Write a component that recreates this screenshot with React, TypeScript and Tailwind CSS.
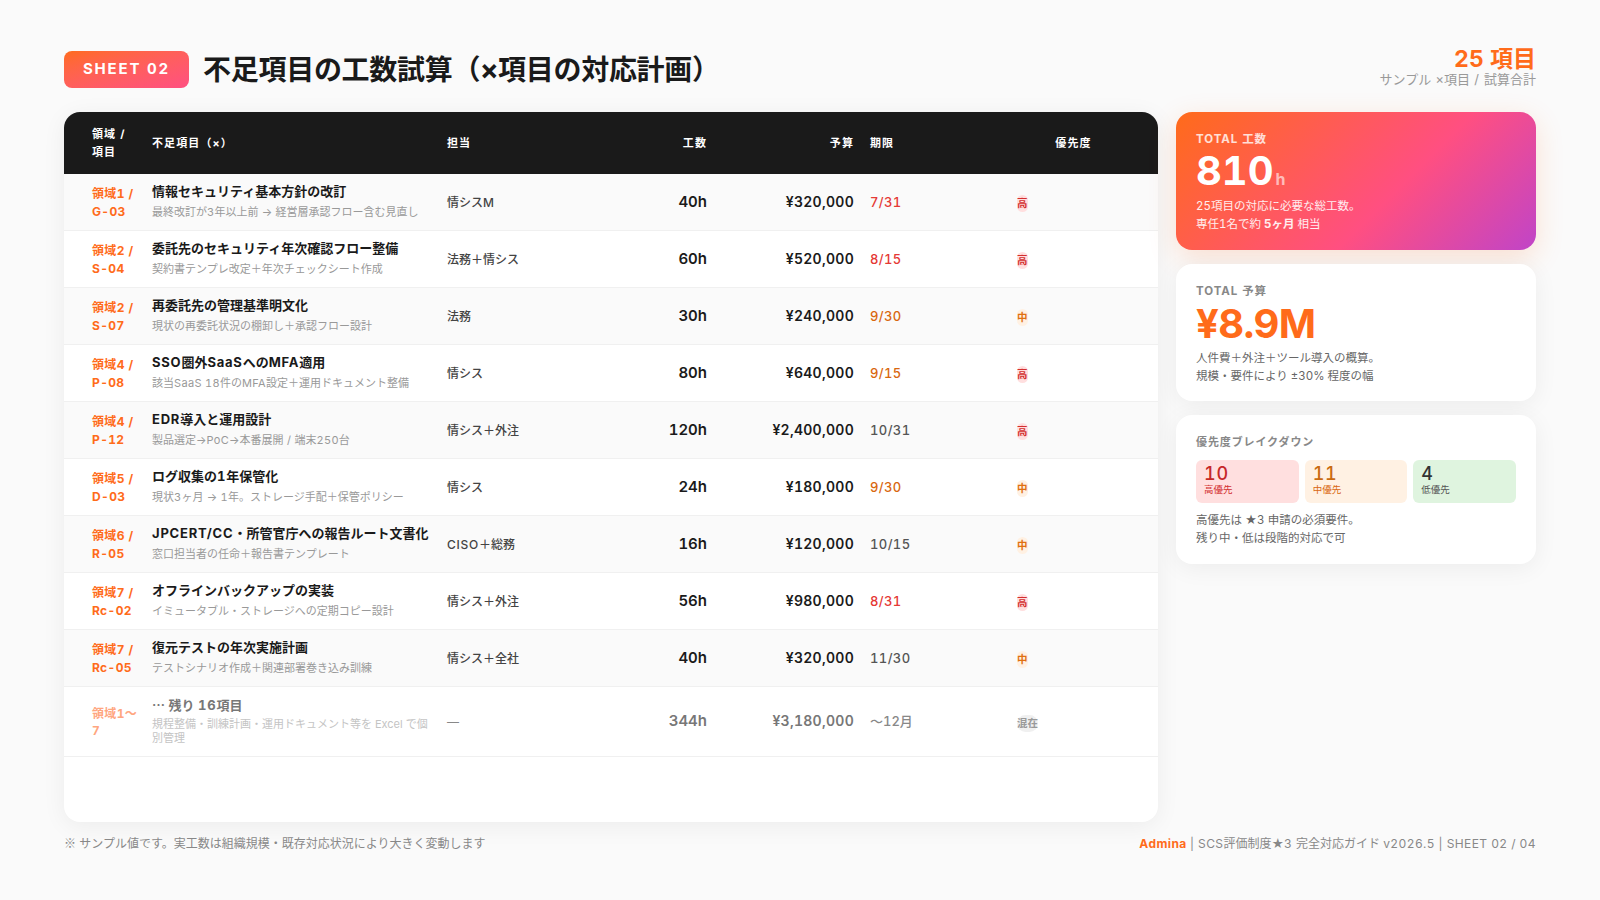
import { Fragment } from 'react';

const rows = [
  { area: '領域1 / G-03', title: '情報セキュリティ基本方針の改訂', sub: '最終改訂が3年以上前 → 経営層承認フロー含む見直し', owner: '情シスM', hours: '40h', cost: '¥320,000', due: '7/31', dueTone: 'red', pri: '高' },
  { area: '領域2 / S-04', title: '委託先のセキュリティ年次確認フロー整備', sub: '契約書テンプレ改定＋年次チェックシート作成', owner: '法務＋情シス', hours: '60h', cost: '¥520,000', due: '8/15', dueTone: 'red', pri: '高' },
  { area: '領域2 / S-07', title: '再委託先の管理基準明文化', sub: '現状の再委託状況の棚卸し＋承認フロー設計', owner: '法務', hours: '30h', cost: '¥240,000', due: '9/30', dueTone: 'orange', pri: '中' },
  { area: '領域4 / P-08', title: 'SSO圏外SaaSへのMFA適用', sub: '該当SaaS 18件のMFA設定＋運用ドキュメント整備', owner: '情シス', hours: '80h', cost: '¥640,000', due: '9/15', dueTone: 'orange', pri: '高' },
  { area: '領域4 / P-12', title: 'EDR導入と運用設計', sub: '製品選定→PoC→本番展開 / 端末250台', owner: '情シス＋外注', hours: '120h', cost: '¥2,400,000', due: '10/31', dueTone: 'gray', pri: '高' },
  { area: '領域5 / D-03', title: 'ログ収集の1年保管化', sub: '現状3ヶ月 → 1年。ストレージ手配＋保管ポリシー', owner: '情シス', hours: '24h', cost: '¥180,000', due: '9/30', dueTone: 'orange', pri: '中' },
  { area: '領域6 / R-05', title: 'JPCERT/CC・所管官庁への報告ルート文書化', sub: '窓口担当者の任命＋報告書テンプレート', owner: 'CISO＋総務', hours: '16h', cost: '¥120,000', due: '10/15', dueTone: 'gray', pri: '中' },
  { area: '領域7 / Rc-02', title: 'オフラインバックアップの実装', sub: 'イミュータブル・ストレージへの定期コピー設計', owner: '情シス＋外注', hours: '56h', cost: '¥980,000', due: '8/31', dueTone: 'red', pri: '高' },
  { area: '領域7 / Rc-05', title: '復元テストの年次実施計画', sub: 'テストシナリオ作成＋関連部署巻き込み訓練', owner: '情シス＋全社', hours: '40h', cost: '¥320,000', due: '11/30', dueTone: 'gray', pri: '中' },
];

// latin runs sit a bit wider than Inter next to the CJK text
function Mixed({ text, latin = 'tracking-[0.06em]' }: { text: string; latin?: string }) {
  const parts = text.split(/([\x20-\x7e]+)/);
  return (
    <>
      {parts.map((p, i) =>
        i % 2 === 1 ? <span key={i} className={latin}>{p}</span> : <Fragment key={i}>{p}</Fragment>,
      )}
    </>
  );
}

function DueText({ due, tone }: { due: string; tone: string }) {
  if (tone === 'red') return <span className="text-[#e53935]">{due}</span>;
  if (tone === 'orange') return <span className="text-[#d9670f]">{due}</span>;
  return <span className="text-[#555555]">{due}</span>;
}

function PriBadge({ pri }: { pri: string }) {
  if (pri === '高') {
    return <span className="inline-block w-[11px] rounded-full bg-[#ffdfdf] py-[2px] text-[10.5px] font-bold leading-[13px] text-[#d32f2f]">{pri}</span>;
  }
  return <span className="inline-block w-[11px] rounded-full bg-[#fff1e3] py-[2px] text-[10.5px] font-bold leading-[13px] text-[#e07010]">{pri}</span>;
}

const cellLine = 'h-[57px] border-b border-[#f0f0f0]';
const footerLatin = 'tracking-[0.035em]';

export default function App() {
  return (
    <div className="flex h-[900px] w-[1600px] flex-col bg-[#fafafa] px-16 pt-[51px] font-[Inter,'Noto_Sans_CJK_JP',sans-serif] tabular-nums text-[#1a1a1a]">
      {/* Header */}
      <div className="mb-6 flex h-[37px] items-center justify-between">
        <div className="flex items-center gap-[14px]">
          <div className="flex h-[37px] w-[125px] items-center justify-center rounded-lg bg-gradient-to-br from-[#ff6b1a] to-[#ff4f81] text-[15px] font-bold tracking-[0.12em] text-white">
            SHEET 02
          </div>
          <h1 className="pt-[1px] text-[28px] font-bold tracking-[-0.01em]">不足項目の工数試算（×項目の対応計画）</h1>
        </div>
        <div className="pb-[8px] text-right">
          <div className="text-[23px] font-bold leading-[26px] text-[#ff6b1a]">25 項目</div>
          <div className="text-[13px] leading-[14px] text-[#999999]"><Mixed text="サンプル ×" latin="tracking-[0.06em]" />項目<Mixed text=" / " latin="tracking-[0.06em]" />試算合計</div>
        </div>
      </div>

      {/* Main */}
      <div className="flex h-[710px] gap-[18px]">
        <div className="w-[1094px] overflow-hidden rounded-2xl bg-white shadow-[0_4px_24px_rgba(0,0,0,0.06)]">
          <table className="w-full table-fixed border-separate border-spacing-0 text-left">
            <colgroup>
              <col className="w-[80px]" />
              <col className="w-[295px]" />
              <col className="w-[179px]" />
              <col className="w-[97px]" />
              <col className="w-[147px]" />
              <col className="w-[147px]" />
              <col className="w-[149px]" />
            </colgroup>
            <thead>
              <tr className="h-[62px] bg-[#1a1a1a] text-[11px] font-bold leading-[17.5px] tracking-[0.1em] text-white">
                <th className="pl-7 pr-2 pt-[1px]">領域 / 項目</th>
                <th className="px-2 pt-[1px]">不足項目（×）</th>
                <th className="px-2 pt-[1px]">担当</th>
                <th className="px-2 pt-[1px] text-right">工数</th>
                <th className="px-2 pt-[1px] text-right">予算</th>
                <th className="px-2 pt-[1px]">期限</th>
                <th className="pl-2 pr-7 pt-[1px] text-center">優先度</th>
              </tr>
            </thead>
            <tbody>
              {rows.map((r, i) => (
                <tr key={r.area} className={i % 2 === 0 ? 'bg-[#fafafa]' : 'bg-white'}>
                  <td className={`${cellLine} pl-7 pr-1 pt-[1px] text-[12px] font-bold leading-[17.5px] tracking-[0.03em] text-[#ff6b1a]`}>{r.area}</td>
                  <td className={`${cellLine} px-2 pb-[2px]`}>
                    <div className="text-[13px] font-bold leading-[18px]"><Mixed text={r.title} /></div>
                    <div className="mt-[5px] text-[11px] leading-[15px] text-[#999999]"><Mixed text={r.sub} latin="tracking-[0.03em]" /></div>
                  </td>
                  <td className={`${cellLine} px-2 pt-[2px] text-[12px] font-medium text-[#444444]`}><Mixed text={r.owner} /></td>
                  <td className={`${cellLine} px-2 text-right text-[15px] font-semibold`}>{r.hours}</td>
                  <td className={`${cellLine} px-2 pb-[2px] text-right text-[14px] font-semibold tracking-[0.02em]`}>{r.cost}</td>
                  <td className={`${cellLine} px-2 pt-[1px] text-[13px] font-medium tracking-[0.03em]`}><DueText due={r.due} tone={r.dueTone} /></td>
                  <td className={`${cellLine} pb-[2px] pl-2 pr-7`}><PriBadge pri={r.pri} /></td>
                </tr>
              ))}
              <tr className="bg-white">
                <td className="h-[70px] border-b border-[#f0f0f0] pl-7 pr-1 pt-[1px] text-[12px] font-bold leading-[17.5px] tracking-[0.03em] text-[#ffa680]">領域1〜7</td>
                <td className="h-[70px] border-b border-[#f0f0f0] px-2 pb-[3px]">
                  <div className="text-[13px] font-bold leading-[18px] text-[#777777]"><span className="font-['Noto_Sans_CJK_JP']">…</span> 残り <Mixed text="16" />項目</div>
                  <div className="mt-[3px] text-[11px] leading-[14px] text-[#c4c4c4]">規程整備・訓練計画・運用ドキュメント等を Excel で個<br />別管理</div>
                </td>
                <td className="h-[70px] border-b border-[#f0f0f0] px-2 text-[12px] font-medium text-[#888888]">—</td>
                <td className="h-[70px] border-b border-[#f0f0f0] px-2 text-right text-[15px] font-semibold text-[#777777]">344h</td>
                <td className="h-[70px] border-b border-[#f0f0f0] px-2 pb-[2px] text-right text-[14px] font-semibold tracking-[0.02em] text-[#777777]">¥3,180,000</td>
                <td className="h-[70px] border-b border-[#f0f0f0] px-2 pt-[1px] text-[13px] font-medium text-[#888888]">〜12月</td>
                <td className="h-[70px] border-b border-[#f0f0f0] pb-[1px] pl-2 pr-7">
                  <span className="inline-block rounded-full bg-[#f0f0f0] py-[2px] text-[10.5px] font-bold leading-[13px] text-[#999999]">混在</span>
                </td>
              </tr>
            </tbody>
          </table>
        </div>

        {/* Side cards */}
        <div className="flex w-[360px] flex-col gap-[14px]">
          <div className="h-[138px] rounded-2xl bg-[linear-gradient(135deg,#ff6b1a_0%,#ff4f81_60%,#c044c8_100%)] px-5 pt-[19px] text-white shadow-[0_8px_28px_rgba(255,107,26,0.18)]">
            <div className="text-[11.5px] font-bold leading-[16px] tracking-[0.08em] text-white/80">TOTAL 工数</div>
            <div className="mt-[2px] flex h-[44px] items-baseline leading-[44px]">
              <span className="text-[40px] font-bold">810</span>
              <span className="ml-[2px] text-[16px] font-bold text-white/60">h</span>
            </div>
            <div className="mt-[5px] text-[11.5px] leading-[17.5px] text-white/90">
              25項目の対応に必要な総工数。<br />専任1名で約 <b className="font-bold">5ヶ月</b> 相当
            </div>
          </div>
          <div className="h-[137px] rounded-2xl bg-white px-5 pt-[19px] shadow-[0_4px_24px_rgba(0,0,0,0.06)]">
            <div className="text-[11.5px] font-bold leading-[16px] tracking-[0.08em] text-[#888888]">TOTAL 予算</div>
            <div className="mt-[3px] text-[40px] font-bold leading-[44px] tracking-[-0.015em] text-[#ff6b1a]">¥8.9M</div>
            <div className="mt-[4px] text-[11.5px] leading-[17.5px] text-[#666666]">
              人件費＋外注＋ツール導入の概算。<br />規模・要件により ±30% 程度の幅
            </div>
          </div>
          <div className="h-[149px] rounded-2xl bg-white px-5 pt-[19px] shadow-[0_4px_24px_rgba(0,0,0,0.06)]">
            <div className="text-[11px] font-bold leading-[16px] tracking-[0.08em] text-[#888888]">優先度ブレイクダウン</div>
            <div className="mt-[10px] flex gap-[6px]">
              <div className="h-[43px] flex-1 rounded-md bg-[#ffdfdf] pl-2 pt-[3px]">
                <div className="text-[18px] font-medium leading-[21px] tracking-[0.04em] text-[#c62828]">10</div>
                <div className="text-[9.5px] leading-[12px] text-[#d32f2f]">高優先</div>
              </div>
              <div className="h-[43px] flex-1 rounded-md bg-[#fff1e3] pl-2 pt-[3px]">
                <div className="text-[18px] font-medium leading-[21px] tracking-[0.04em] text-[#c96a10]">11</div>
                <div className="text-[9.5px] leading-[12px] text-[#d9670f]">中優先</div>
              </div>
              <div className="h-[43px] flex-1 rounded-md bg-[#dff4df] pl-2 pt-[3px]">
                <div className="text-[18px] font-medium leading-[21px] text-[#333333]">4</div>
                <div className="text-[9.5px] leading-[12px] text-[#555555]">低優先</div>
              </div>
            </div>
            <div className="mt-[9px] text-[11.5px] leading-[17.5px] text-[#666666]">
              高優先は ★3 申請の必須要件。<br />残り中・低は段階的対応で可
            </div>
          </div>
        </div>
      </div>

      {/* Footer */}
      <div className="mt-[13px] flex items-center justify-between text-[12px] leading-[16px] text-[#888888]">
        <div><span className="font-['Noto_Sans_CJK_JP']">※</span> サンプル値です。実工数は組織規模・既存対応状況により大きく変動します</div>
        <div><span className="font-bold tracking-[0.035em] text-[#ff6b1a]">Admina</span> <Mixed text="| SCS" latin={footerLatin} />評価制度★<Mixed text="3 " latin={footerLatin} />完全対応ガイド <Mixed text="v2026.5 | SHEET 02 / 04" latin={footerLatin} /></div>
      </div>
    </div>
  );
}
